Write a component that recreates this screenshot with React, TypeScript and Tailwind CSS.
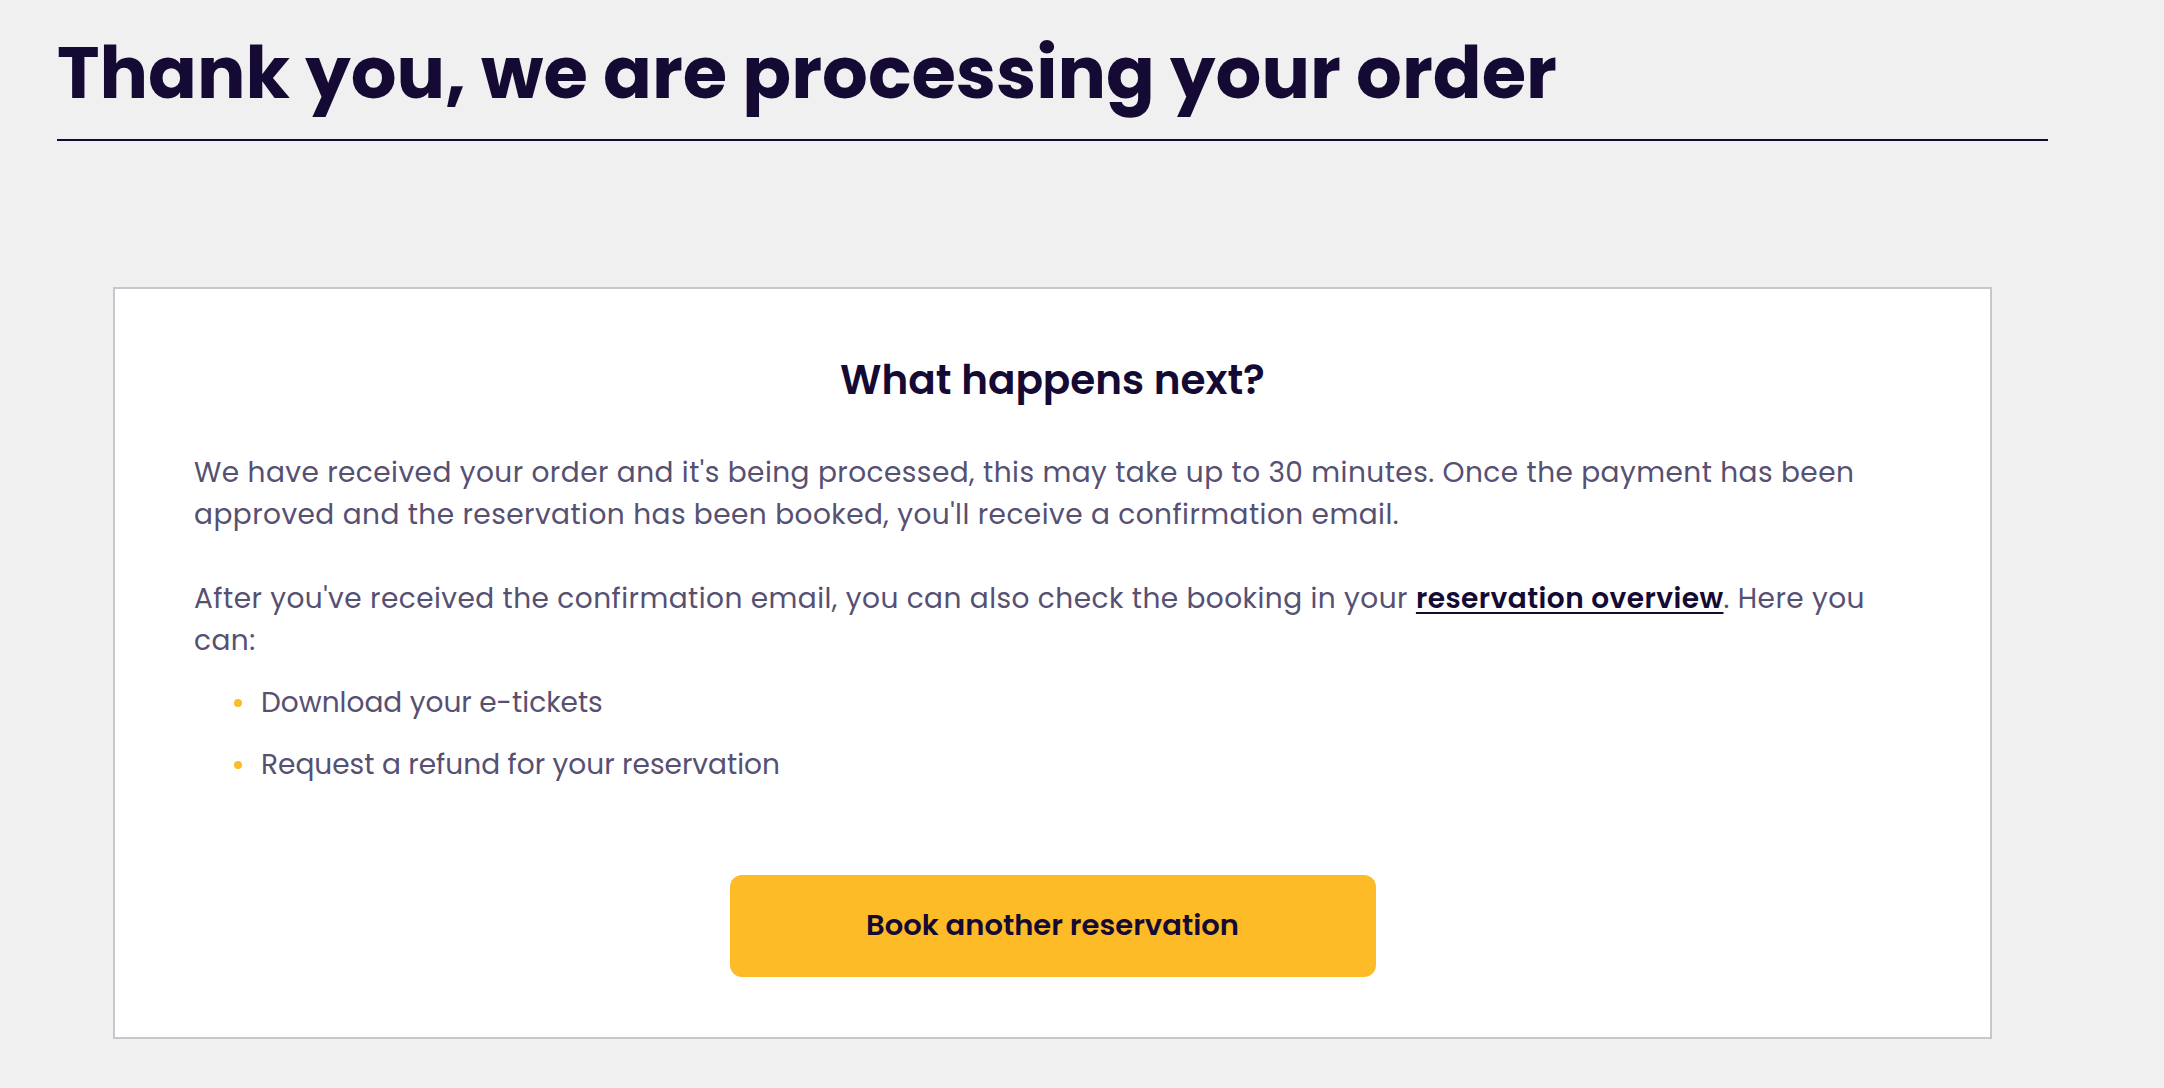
import React from "react";

export default function App() {
  const font = { fontFamily: "Poppins, Inter, 'Noto Sans', sans-serif" };
  return (
    <div className="min-h-[1088px] w-full bg-[#f0f0f0]" style={font}>
      <div className="ml-[57px] w-[1991px] pt-[31px]">
        <h1 className="text-[72px] leading-[84px] font-bold text-[#140a33]">
          Thank you, we are processing your order
        </h1>
        <div className="mt-[24px] h-[2px] bg-[#140a33]" />
        <div className="mx-[56px] mt-[146px] border-2 border-[#c7c7cd] bg-white px-[79px] pt-[65px] pb-[60px]">
          <h2 className="text-center text-[40.5px] leading-[52px] font-semibold text-[#140a33]">
            What happens next?
          </h2>
          <div className="mt-[46px] text-[28px] leading-[42px] text-[#565072]">
            <p className="tracking-[0.45px]">
              We have received your order and it's being processed, this may take up to 30 minutes. Once the payment has been
              <br />
              approved and the reservation has been booked, you'll receive a confirmation email.
            </p>
            <p className="mt-[42px] tracking-[0.45px]">
              After you've received the confirmation email, you can also check the booking in your{" "}
              <a href="#" className="font-semibold text-[#140a33] underline underline-offset-[4px] decoration-2">
                reservation overview
              </a>
              . Here you
              <br />
              can:
            </p>
            <ul className="mt-[20px] ml-[40px] flex flex-col gap-[20px]">
              <li className="flex items-center gap-[19px]">
                <span className="h-[8px] w-[8px] rounded-full bg-[#fcbb27]" />
                <span>Download your e-tickets</span>
              </li>
              <li className="flex items-center gap-[19px]">
                <span className="h-[8px] w-[8px] rounded-full bg-[#fcbb27]" />
                <span>Request a refund for your reservation</span>
              </li>
            </ul>
          </div>
          <div className="mt-[89px] flex justify-center">
            <button className="h-[102px] w-[646px] rounded-[12px] bg-[#fcbb27] text-[29px] font-semibold text-[#140a33]">
              Book another reservation
            </button>
          </div>
        </div>
      </div>
    </div>
  );
}
